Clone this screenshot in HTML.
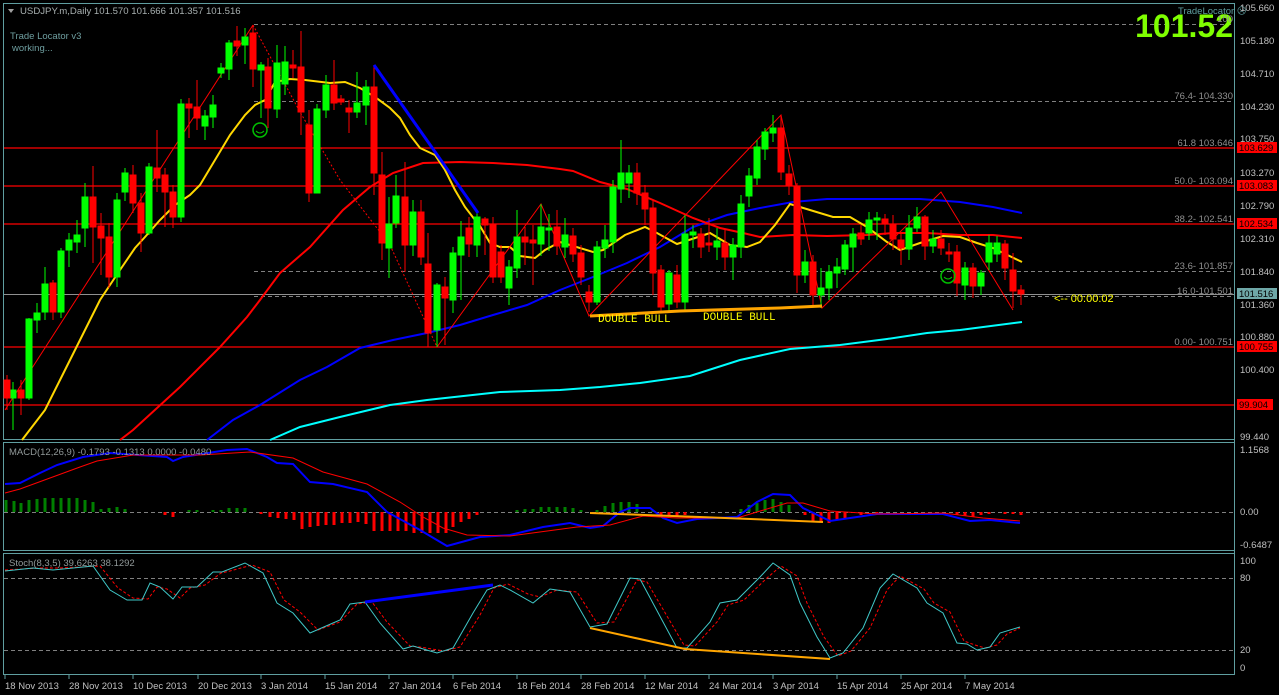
<!DOCTYPE html>
<html><head><meta charset="utf-8"><style>
html,body{margin:0;padding:0;background:#000;width:1279px;height:695px;overflow:hidden}
svg{display:block;font-family:"Liberation Sans",sans-serif}
</style></head><body>
<svg width="1279" height="695" viewBox="0 0 1279 695" xmlns="http://www.w3.org/2000/svg">
<rect width="1279" height="695" fill="#000"/>
<g fill="none" stroke="#5f9ea0" stroke-width="1">
<rect x="3.5" y="3.5" width="1231" height="436"/>
<rect x="3.5" y="442.5" width="1231" height="108"/>
<rect x="3.5" y="553.5" width="1231" height="121"/>
<line x1="1234.5" y1="3" x2="1234.5" y2="675"/>
</g>
<g stroke="#ff0000" stroke-width="1.2">
<line x1="4" y1="148" x2="1234" y2="148"/><line x1="4" y1="186" x2="1234" y2="186"/>
<line x1="4" y1="224" x2="1234" y2="224"/><line x1="4" y1="347" x2="1234" y2="347"/>
<line x1="4" y1="405" x2="1234" y2="405"/>
</g>
<g stroke="#808080" stroke-width="1" stroke-dasharray="4,3">
<line x1="254" y1="24.5" x2="1234" y2="24.5"/><line x1="254" y1="101.5" x2="1234" y2="101.5"/>
<line x1="254" y1="271.5" x2="1234" y2="271.5"/><line x1="254" y1="296.5" x2="1234" y2="296.5"/>
<line x1="4" y1="512.5" x2="1234" y2="512.5"/><line x1="4" y1="578.5" x2="1234" y2="578.5"/><line x1="4" y1="650.5" x2="1234" y2="650.5"/>
</g>
<line x1="4" y1="294.5" x2="1234" y2="294.5" stroke="#909090"/>

<!-- MAs -->
<g fill="none" stroke-width="2">
<polyline stroke="#00ffff" points="270,440 300,427 340,417 390,405 427,400 500,392 560,390 600,387 640,383 690,376 740,360 790,349 840,345 887,339 927,333 960,330 1022,322"/>
<polyline stroke="#0000ff" points="207,440 233,420 260,405 300,380 327,367 360,348 393,340 427,333 460,325 493,315 527,305 560,290 593,277 627,263 660,247 693,227 727,215 760,208 793,202 827,199 860,199 920,199 960,202 993,207 1022,213"/>
<polyline stroke="#ff0000" points="120,440 133,430 180,387 220,347 247,317 260,300 280,273 310,247 343,210 370,187 393,173 423,163 460,162 493,163 527,165 560,169 573,171 600,182 627,189 660,203 693,218 720,228 743,233 760,237 793,235 827,236 867,235 893,233 927,233 960,235 993,235 1022,238"/>
<polyline stroke="#ffd700" points="22,440 45,410 60,380 75,350 100,300 120,270 135,248 145,237 160,220 175,205 190,195 200,185 215,160 230,135 245,115 255,105 265,100 275,82 290,79 305,80 330,83 345,82 360,88 375,97 390,108 400,118 410,135 420,148 435,155 445,170 455,190 465,207 475,220 480,226 490,243 500,247 510,247 520,256 535,258 545,250 560,242 593,252 603,250 625,235 645,227 657,233 677,244 710,233 730,245 747,247 760,242 775,225 790,204 800,207 833,217 850,217 867,227 887,242 900,250 920,243 943,236 960,237 977,243 993,248 1022,262"/>
</g>
<!-- zigzag -->
<g fill="none" stroke="#ff0000" stroke-width="1">
<polyline points="5,410 253,25"/>
<polyline points="253,25 300,112 340,180 390,245 437,347" stroke-dasharray="2,2"/>
<polyline points="437,347 541,204 589,316 781,115 822,308 941,192 1013,310"/>
</g>

<!-- candles -->
<g stroke-width="1">
<g stroke="#00ff00" fill="#00ff00">
<path d="M13 382V430M29 318V400M37 303V333M45 267V320M61 248V318M69 233V267M77 220V253M85 183V247M117 193V287M125 168V201M149 163V235M181 99V222M205 110V140M213 95V128M221 63V78M229 40V80M245 28V64M261 62V118M277 45V118M285 46V95M317 104V193M326 75V118M357 72V118M366 80V125M389 197V278M396 175V228M413 200V256M437 283V347M453 247V313M461 221V300M477 212V257M509 260V305M517 210V278M541 204V256M549 214V251M565 218V258M597 241V305M605 225V258M613 180V253M621 140V203M629 165V198M669 270V312M685 215V310M693 225V248M717 228V260M733 238V280M741 195V258M749 168V207M757 140V185M765 128V160M773 115V142M805 250V283M821 268V308M829 265V300M837 258V288M845 240V275M853 228V272M869 212V240M877 212V240M909 215V260M917 207V232M933 230V253M965 262V300M981 270V295M989 235V270M997 236V262"/>
<rect x="10" y="390" width="6" height="8"/><rect x="26" y="319" width="6" height="79"/><rect x="34" y="313" width="6" height="7"/><rect x="42" y="284" width="6" height="28"/><rect x="58" y="251" width="6" height="61"/><rect x="66" y="240" width="6" height="10"/><rect x="74" y="235" width="6" height="7"/><rect x="82" y="197" width="6" height="31"/><rect x="114" y="200" width="6" height="77"/><rect x="122" y="173" width="6" height="19"/><rect x="146" y="167" width="6" height="66"/><rect x="178" y="104" width="6" height="113"/><rect x="202" y="116" width="6" height="10"/><rect x="210" y="105" width="6" height="12"/><rect x="218" y="68" width="6" height="5"/><rect x="226" y="43" width="6" height="26"/><rect x="242" y="37" width="6" height="8"/><rect x="258" y="65" width="6" height="5"/><rect x="274" y="63" width="6" height="46"/><rect x="282" y="62" width="6" height="22"/><rect x="314" y="109" width="6" height="84"/><rect x="323" y="85" width="6" height="25"/><rect x="354" y="103" width="6" height="9"/><rect x="363" y="87" width="6" height="18"/><rect x="386" y="224" width="6" height="24"/><rect x="393" y="196" width="6" height="27"/><rect x="410" y="212" width="6" height="33"/><rect x="434" y="285" width="6" height="45"/><rect x="450" y="253" width="6" height="47"/><rect x="458" y="237" width="6" height="18"/><rect x="474" y="217" width="6" height="28"/><rect x="506" y="267" width="6" height="21"/><rect x="514" y="237" width="6" height="31"/><rect x="538" y="227" width="6" height="17"/><rect x="546" y="228" width="6" height="2"/><rect x="562" y="235" width="6" height="12"/><rect x="594" y="247" width="6" height="55"/><rect x="602" y="240" width="6" height="8"/><rect x="610" y="187" width="6" height="55"/><rect x="618" y="173" width="6" height="16"/><rect x="626" y="173" width="6" height="10"/><rect x="666" y="273" width="6" height="31"/><rect x="682" y="234" width="6" height="68"/><rect x="690" y="232" width="6" height="3"/><rect x="714" y="241" width="6" height="6"/><rect x="730" y="245" width="6" height="12"/><rect x="738" y="204" width="6" height="43"/><rect x="746" y="176" width="6" height="20"/><rect x="754" y="147" width="6" height="31"/><rect x="762" y="132" width="6" height="17"/><rect x="770" y="128" width="6" height="5"/><rect x="802" y="262" width="6" height="13"/><rect x="818" y="288" width="6" height="7"/><rect x="826" y="272" width="6" height="16"/><rect x="834" y="267" width="6" height="6"/><rect x="842" y="245" width="6" height="24"/><rect x="850" y="234" width="6" height="13"/><rect x="866" y="220" width="6" height="13"/><rect x="874" y="218" width="6" height="2"/><rect x="906" y="228" width="6" height="21"/><rect x="914" y="217" width="6" height="11"/><rect x="930" y="239" width="6" height="7"/><rect x="962" y="268" width="6" height="17"/><rect x="978" y="273" width="6" height="13"/><rect x="986" y="243" width="6" height="19"/><rect x="994" y="243" width="6" height="11"/>
</g>
<g stroke="#ff0000" fill="#ff0000">
<path d="M7 375V410M21 380V415M53 280V320M93 166V263M101 213V275M109 223V288M133 165V213M141 193V252M157 130V192M165 168V227M173 185V228M189 98V138M197 80V130M237 26V56M253 25V87M268 58V128M293 50V78M301 31V135M309 110V202M334 60V110M341 95V105M349 100V133M374 65V195M382 152V260M405 162V272M421 200V265M428 233V347M445 277V345M469 217V257M485 217V255M493 217V283M501 245V283M525 227V265M533 225V285M557 210V255M573 228V262M581 245V285M589 285V312M637 163V205M645 185V225M653 200V295M661 265V313M677 265V308M701 228V258M709 218V252M725 230V270M781 115V180M789 165V195M797 183V293M813 255V305M861 225V245M885 214V235M893 215V250M901 233V265M925 215V260M941 230V255M949 243V262M957 245V296M973 263V298M1005 240V280M1013 253V308M1021 285V305"/>
<rect x="4" y="380" width="6" height="18"/><rect x="18" y="390" width="6" height="8"/><rect x="50" y="283" width="6" height="29"/><rect x="90" y="197" width="6" height="30"/><rect x="98" y="226" width="6" height="12"/><rect x="106" y="237" width="6" height="40"/><rect x="130" y="175" width="6" height="28"/><rect x="138" y="203" width="6" height="30"/><rect x="154" y="168" width="6" height="10"/><rect x="162" y="175" width="6" height="17"/><rect x="170" y="192" width="6" height="25"/><rect x="186" y="104" width="6" height="4"/><rect x="194" y="107" width="6" height="11"/><rect x="234" y="41" width="6" height="5"/><rect x="250" y="33" width="6" height="36"/><rect x="265" y="67" width="6" height="41"/><rect x="290" y="65" width="6" height="3"/><rect x="298" y="67" width="6" height="45"/><rect x="306" y="125" width="6" height="68"/><rect x="331" y="85" width="6" height="18"/><rect x="338" y="99" width="6" height="3"/><rect x="346" y="108" width="6" height="4"/><rect x="371" y="87" width="6" height="86"/><rect x="379" y="175" width="6" height="68"/><rect x="402" y="197" width="6" height="48"/><rect x="418" y="212" width="6" height="45"/><rect x="425" y="264" width="6" height="69"/><rect x="442" y="287" width="6" height="11"/><rect x="466" y="228" width="6" height="16"/><rect x="482" y="219" width="6" height="6"/><rect x="490" y="225" width="6" height="52"/><rect x="498" y="252" width="6" height="25"/><rect x="522" y="237" width="6" height="5"/><rect x="530" y="240" width="6" height="3"/><rect x="554" y="227" width="6" height="19"/><rect x="570" y="236" width="6" height="18"/><rect x="578" y="253" width="6" height="24"/><rect x="586" y="292" width="6" height="10"/><rect x="634" y="173" width="6" height="20"/><rect x="642" y="193" width="6" height="16"/><rect x="650" y="208" width="6" height="65"/><rect x="658" y="270" width="6" height="37"/><rect x="674" y="275" width="6" height="27"/><rect x="698" y="234" width="6" height="13"/><rect x="706" y="243" width="6" height="2"/><rect x="722" y="243" width="6" height="14"/><rect x="778" y="128" width="6" height="44"/><rect x="786" y="174" width="6" height="12"/><rect x="794" y="186" width="6" height="89"/><rect x="810" y="262" width="6" height="33"/><rect x="858" y="233" width="6" height="6"/><rect x="882" y="219" width="6" height="5"/><rect x="890" y="224" width="6" height="15"/><rect x="898" y="240" width="6" height="8"/><rect x="922" y="217" width="6" height="29"/><rect x="938" y="239" width="6" height="9"/><rect x="946" y="252" width="6" height="2"/><rect x="954" y="252" width="6" height="31"/><rect x="970" y="268" width="6" height="18"/><rect x="1002" y="244" width="6" height="24"/><rect x="1010" y="270" width="6" height="21"/><rect x="1018" y="290" width="6" height="4"/>
</g>
</g>

<line x1="374" y1="65" x2="478" y2="213" stroke="#0000ff" stroke-width="3"/>
<polyline points="590,316 680,311 780,308 822,306" fill="none" stroke="#ffa500" stroke-width="3"/>
<text x="598" y="322" fill="#ffff00" font-family="Liberation Mono,monospace" font-size="11">DOUBLE BULL</text>
<text x="703" y="320" fill="#ffff00" font-family="Liberation Mono,monospace" font-size="11">DOUBLE BULL</text>
<text x="1054" y="302" fill="#ffff00" font-size="11">&lt;-- 00:00:02</text>
<circle cx="260" cy="130" r="7" fill="none" stroke="#00c000" stroke-width="1.5"/>
<path d="M256,131 q4,4 8,0" stroke="#00c000" fill="none"/>
<circle cx="948" cy="276" r="7" fill="none" stroke="#00c000" stroke-width="1.5"/>
<path d="M944,277 q4,4 8,0" stroke="#00c000" fill="none"/>

<path d="M8,9 l6,0 l-3,4 z" fill="#a0a0a0"/>
<text x="20" y="14" fill="#a8b0b0" font-size="9.6">USDJPY.m,Daily  101.570 101.666 101.357 101.516</text>
<text x="10" y="39" fill="#6f9fa0" font-size="9.5">Trade Locator v3</text>
<text x="12" y="51" fill="#6f9fa0" font-size="9.5">working...</text>
<text x="1178" y="14" fill="#5f9ea0" font-size="9.5">TradeLocator ☹</text>
<text x="1233" y="37" fill="#7fff00" font-size="32" font-weight="bold" text-anchor="end">101.52</text>

<g fill="#909090" font-size="9.5" text-anchor="end">
<text x="1233" y="22">100</text><text x="1233" y="99">76.4- 104.330</text><text x="1233" y="146">61.8 103.646</text>
<text x="1233" y="184">50.0- 103.094</text><text x="1233" y="222">38.2- 102.541</text><text x="1233" y="269">23.6- 101.857</text>
<text x="1233" y="294">16.0-101.501</text><text x="1233" y="345">0.00- 100.751</text>
</g>
<g fill="#c0c0c0" font-size="9.5">
<text x="1240" y="11">105.660</text><text x="1240" y="44">105.180</text><text x="1240" y="77">104.710</text>
<text x="1240" y="110">104.230</text><text x="1240" y="142">103.750</text><text x="1240" y="176">103.270</text>
<text x="1240" y="209">102.790</text><text x="1240" y="242">102.310</text><text x="1240" y="275">101.840</text>
<text x="1240" y="308">101.360</text><text x="1240" y="340">100.880</text><text x="1240" y="373">100.400</text><text x="1240" y="440">99.440</text>
<text x="1240" y="453">1.1568</text><text x="1240" y="515">0.00</text><text x="1240" y="548">-0.6487</text>
<text x="1240" y="564">100</text><text x="1240" y="581">80</text><text x="1240" y="653">20</text><text x="1240" y="671">0</text>
</g>
<g font-size="9.5" fill="#000">
<rect x="1237" y="142" width="40" height="11" fill="#ff0000"/><text x="1239" y="151">103.629</text>
<rect x="1237" y="180" width="40" height="11" fill="#ff0000"/><text x="1239" y="189">103.083</text>
<rect x="1237" y="218" width="40" height="11" fill="#ff0000"/><text x="1239" y="227">102.534</text>
<rect x="1237" y="288" width="40" height="11" fill="#6fa8a8"/><text x="1239" y="297">101.516</text>
<rect x="1237" y="341" width="40" height="11" fill="#ff0000"/><text x="1239" y="350">100.755</text>
<rect x="1237" y="399" width="36" height="11" fill="#ff0000"/><text x="1239" y="408">99.904</text>
</g>

<!-- MACD histogram -->
<path stroke="#008000" stroke-width="3" fill="none" d="M6 512v-12M14 512v-11M21 512v-9M29 512v-12M37 512v-13M45 512v-14M53 512v-14M61 512v-14M69 512v-14M77 512v-14M85 512v-12M93 512v-10M101 512v-3M109 512v-4M117 512v-5M125 512v-3M189 512v-2M197 512v-2M213 512v-2M221 512v-2M229 512v-4M237 512v-4M245 512v-4M517 512v-2M525 512v-3M533 512v-3M541 512v-5M549 512v-5M557 512v-5M565 512v-5M573 512v-4M581 512v-2M597 512v-2M605 512v-6M613 512v-9M621 512v-10M629 512v-10M637 512v-8M653 512v-2M741 512v-3M749 512v-7M757 512v-9M765 512v-12M773 512v-13M781 512v-10M789 512v-7"/>
<path stroke="#ff0000" stroke-width="3" fill="none" d="M165 512v3M173 512v5M261 512v2M270 512v5M278 512v6M286 512v7M294 512v8M302 512v17M310 512v15M318 512v14M326 512v13M334 512v13M342 512v11M350 512v11M358 512v10M366 512v12M374 512v19M382 512v19M390 512v19M398 512v19M406 512v19M414 512v21M422 512v21M430 512v21M438 512v21M446 512v21M453 512v15M461 512v10M469 512v7M477 512v3M661 512v3M669 512v4M677 512v4M685 512v3M805 512v3M813 512v9M821 512v10M829 512v11M837 512v8M845 512v6M861 512v3M877 512v2M957 512v3M965 512v4M973 512v5M981 512v3M989 512v2M1005 512v2M1013 512v2M1021 512v3"/>
<polyline fill="none" stroke="#0000ff" stroke-width="2" points="5,484 20,483 40,473 57,465 83,457 110,453 167,457 173,461 183,457 227,450 247,449 267,457 277,463 293,464 310,482 333,484 367,492 387,512 420,530 447,546 480,537 510,535 543,527 570,523 590,528 603,526 620,512 630,508 650,508 663,518 677,523 697,519 737,517 757,502 773,494 790,495 803,508 830,521 857,517 877,514 943,514 970,521 990,520 1020,523"/>
<polyline fill="none" stroke="#ff0000" stroke-width="1" points="5,493 20,489 50,478 80,467 97,461 133,455 200,455 250,452 293,458 323,472 367,484 400,502 423,517 443,528 467,535 510,536 577,527 610,525 643,516 677,518 737,518 757,512 787,503 803,503 830,511 877,514 943,513 983,518 1020,521"/>
<polyline fill="none" stroke="#ffa500" stroke-width="2" points="590,513 700,517 823,522"/>
<text x="9" y="455" fill="#909898" font-size="9.5">MACD(12,26,9) -0.1793 -0.1313 0.0000 -0.0480</text>

<!-- Stoch -->
<polyline fill="none" stroke="#ff0000" stroke-dasharray="3,2" points="5,570 40,568 60,568 100,566 118,588 133,598 148,599 157,587 167,589 180,598 190,588 205,585 221,573 230,571 252,565 270,572 284,600 300,612 318,630 340,622 357,604 372,602 387,622 410,646 420,647 444,651 460,647 480,615 494,588 508,584 528,594 540,597 557,590 577,592 597,623 614,622 637,580 647,582 684,645 695,646 717,622 728,605 744,600 767,578 781,566 797,576 807,603 824,637 838,656 851,651 870,628 887,590 900,576 924,589 934,603 950,612 964,641 975,645 985,648 997,645 1007,634 1020,628"/>
<polyline fill="none" stroke="#40c8c8" points="5,571 33,568 53,570 93,566 110,590 127,600 142,600 150,583 160,587 173,599 182,587 197,587 213,572 222,572 245,563 263,573 277,603 293,613 310,633 333,623 340,620 350,604 365,602 380,623 403,649 413,646 437,653 453,648 473,613 487,590 500,585 510,590 533,603 550,589 570,592 590,627 607,624 630,578 640,579 677,648 687,648 710,622 720,603 737,600 760,577 773,563 790,575 800,603 817,637 830,658 843,653 863,628 880,588 893,574 917,588 927,603 943,613 957,643 967,644 977,650 990,647 1000,633 1020,627"/>
<line x1="365" y1="602" x2="493" y2="585" stroke="#0000ff" stroke-width="3"/>
<polyline fill="none" stroke="#ffa500" stroke-width="2" points="590,628 685,649 830,659"/>
<text x="9" y="566" fill="#909898" font-size="9.5">Stoch(8,3,5) 39.6263 38.1292</text>

<!-- time axis -->
<path stroke="#5f9ea0" d="M5 675v4M69 675v4M133 675v4M198 675v4M261 675v4M325 675v4M389 675v4M453 675v4M517 675v4M581 675v4M645 675v4M709 675v4M773 675v4M837 675v4M901 675v4M965 675v4"/>
<g fill="#c0c0c0" font-size="9.5">
<text x="5" y="689">18 Nov 2013</text><text x="69" y="689">28 Nov 2013</text><text x="133" y="689">10 Dec 2013</text>
<text x="198" y="689">20 Dec 2013</text><text x="261" y="689">3 Jan 2014</text><text x="325" y="689">15 Jan 2014</text>
<text x="389" y="689">27 Jan 2014</text><text x="453" y="689">6 Feb 2014</text><text x="517" y="689">18 Feb 2014</text>
<text x="581" y="689">28 Feb 2014</text><text x="645" y="689">12 Mar 2014</text><text x="709" y="689">24 Mar 2014</text>
<text x="773" y="689">3 Apr 2014</text><text x="837" y="689">15 Apr 2014</text><text x="901" y="689">25 Apr 2014</text>
<text x="965" y="689">7 May 2014</text>
</g>
</svg>
</body></html>
